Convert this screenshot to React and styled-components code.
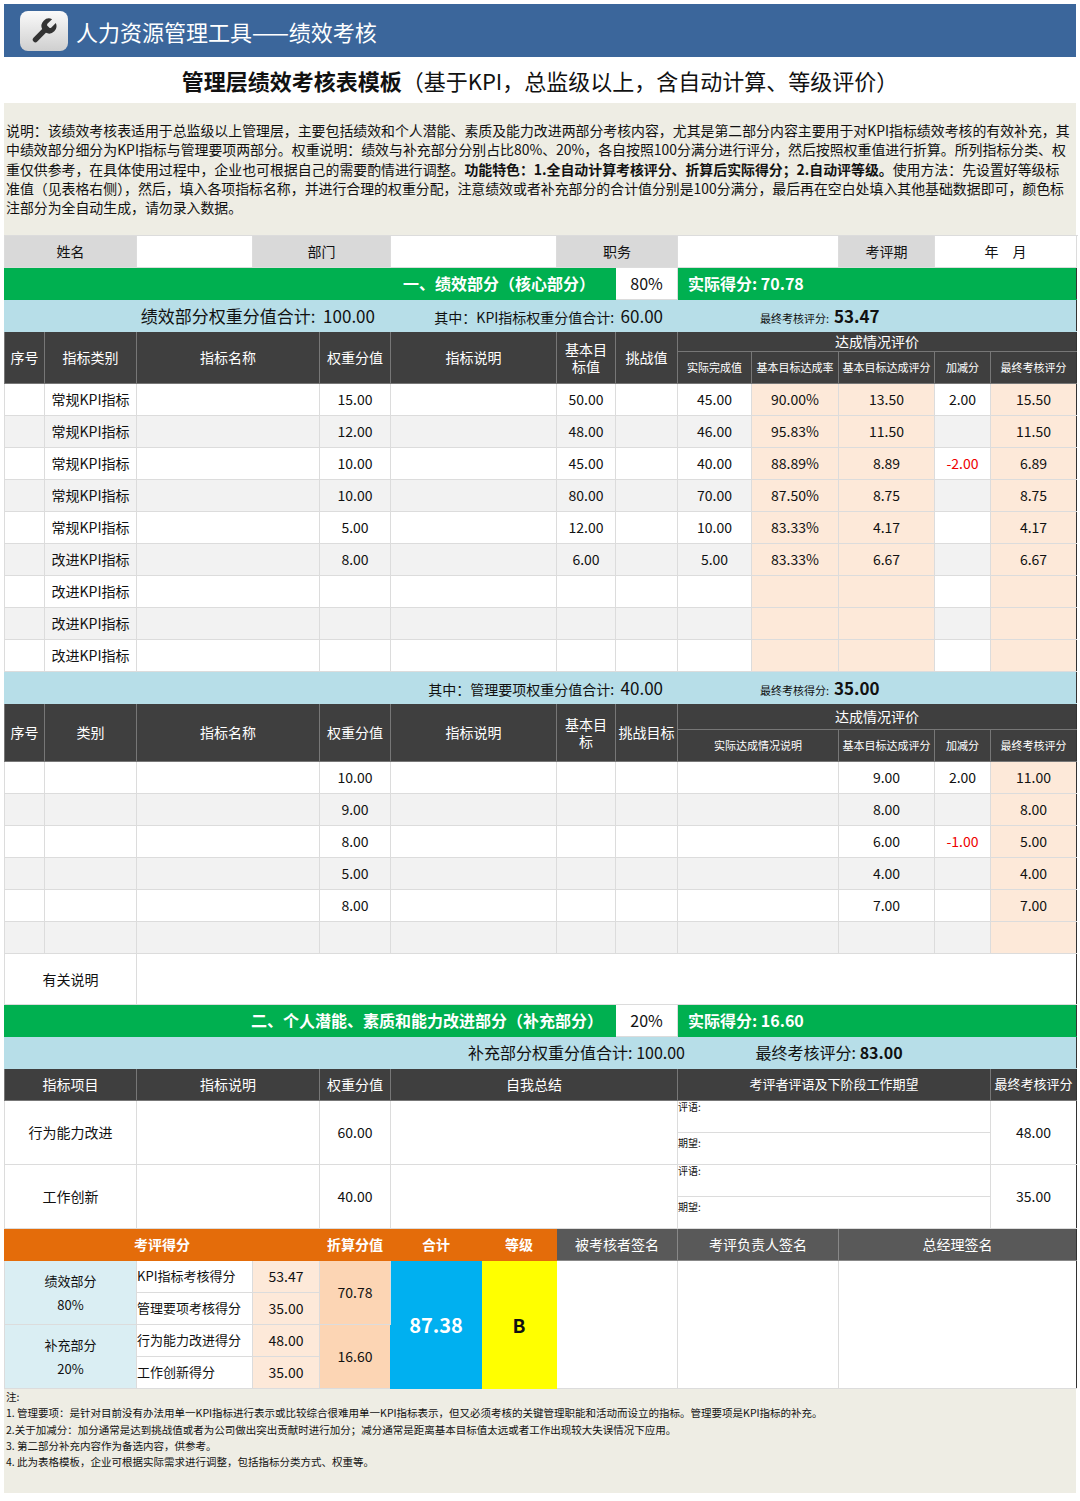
import React from "react";
import styled, { createGlobalStyle } from "styled-components";

const G = createGlobalStyle`
  body{margin:0;background:#fff;font-family:"Noto Sans CJK SC","Noto Sans",sans-serif;color:#111;}
`;
const Page = styled.div`width:1072px;padding:4px;`;
const TitleBar = styled.div`height:53px;background:#3b669b;display:flex;align-items:center;gap:8px;padding-left:16px;color:#fff;font-size:22px;`;
const Icon = styled.div`width:48px;height:40px;border-radius:8px;background:linear-gradient(#fafafa,#cfcfcf);display:flex;align-items:center;justify-content:center;`;
const Sub = styled.div`height:46px;display:flex;align-items:center;justify-content:center;font-size:22px;b{font-weight:700;}`;
const Desc = styled.div`background:#eeede4;padding:18px 4px 18px 2px;font-size:13.9px;line-height:19.3px;height:96px;`;
const T = styled.table`border-collapse:collapse;table-layout:fixed;width:1072px;font-size:14px;border:1.5px solid #333;`;
const C = styled.td`
  box-sizing:border-box;height:${p=>(p.h||33)-1}px;padding:0 ${p=>p.pad||0}px;text-align:${p=>p.al||"center"};
  background:${p=>p.bg||"#fff"};color:${p=>p.fg||"#111"};font-size:${p=>p.fs||14}px;
  font-weight:${p=>p.b?700:400};border:1px solid ${p=>p.bd||"#dcdcdc"};white-space:nowrap;overflow:hidden;line-height:1.15;
`;
const Notes = styled.div`background:#eeede4;font-size:10.5px;line-height:16.3px;padding:0 2px;height:104px;`;

const widths=[40,92,116,67,71,91,75,59,62,74,87,96,56,86];
const DARK="#3f3f3f",GREEN="#00b050",LB="#b7dee8",PE="#fde9d9",GR="#f2f2f2",GY="#d9d9d9",OR="#e46c0a";

const kpi=[
 ["常规KPI指标","15.00","50.00","45.00","90.00%","13.50","2.00","15.50"],
 ["常规KPI指标","12.00","48.00","46.00","95.83%","11.50","","11.50"],
 ["常规KPI指标","10.00","45.00","40.00","88.89%","8.89","-2.00","6.89"],
 ["常规KPI指标","10.00","80.00","70.00","87.50%","8.75","","8.75"],
 ["常规KPI指标","5.00","12.00","10.00","83.33%","4.17","","4.17"],
 ["改进KPI指标","8.00","6.00","5.00","83.33%","6.67","","6.67"],
 ["改进KPI指标","","","","","","",""],
 ["改进KPI指标","","","","","","",""],
 ["改进KPI指标","","","","","","",""],
];
const mg=[["10.00","9.00","2.00","11.00"],["9.00","8.00","","8.00"],["8.00","6.00","-1.00","5.00"],["5.00","4.00","","4.00"],["8.00","7.00","","7.00"],["","","",""]];

export default function App(){
 const H=p=><C bg={DARK} fg="#fff" bd="#777" {...p}/>;
 return <Page><G/>
  <TitleBar><Icon><svg width="30" height="30" viewBox="0 0 24 24"><path d="M14.7 6.3a1 1 0 0 0 0 1.4l1.6 1.6a1 1 0 0 0 1.4 0l3.77-3.77a6 6 0 0 1-7.94 7.94l-6.91 6.91a2.12 2.12 0 0 1-3-3l6.91-6.91a6 6 0 0 1 7.940-7.94l-3.76 3.760z" fill="#333"/></svg></Icon>人力资源管理工具——绩效考核</TitleBar>
  <Sub><b>管理层绩效考核表模板</b>（基于KPI，总监级以上，含自动计算、等级评价）</Sub>
  <Desc>说明：该绩效考核表适用于总监级以上管理层，主要包括绩效和个人潜能、素质及能力改进两部分考核内容，尤其是第二部分内容主要用于对KPI指标绩效考核的有效补充，其中绩效部分细分为KPI指标与管理要项两部分。权重说明：绩效与补充部分分别占比80%、20%，各自按照100分满分进行评分，然后按照权重值进行折算。所列指标分类、权重仅供参考，在具体使用过程中，企业也可根据自己的需要酌情进行调整。<b>功能特色：1.全自动计算考核评分、折算后实际得分；2.自动评等级。</b>使用方法：先设置好等级标准值（见表格右侧），然后，填入各项指标名称，并进行合理的权重分配，注意绩效或者补充部分的合计值分别是100分满分，最后再在空白处填入其他基础数据即可，颜色标注部分为全自动生成，请勿录入数据。</Desc>
  <T><colgroup>{widths.map((w,i)=><col key={i} style={{width:w}}/>)}</colgroup><tbody>
   <tr><C colSpan={2} bg={GY}>姓名</C><C/><C colSpan={2} bg={GY}>部门</C><C colSpan={2}/><C colSpan={2} bg={GY}>职务</C><C colSpan={2}/><C bg={GY}>考评期</C><C colSpan={3}>年　月</C></tr>
   <tr><C colSpan={8} bg={GREEN} fg="#fff" fs={16} b al="right" pad={20} bd={GREEN}>一、绩效部分（核心部分）</C><C fs={16}>80%</C><C colSpan={5} bg={GREEN} fg="#fff" fs={16} b al="left" pad={10} bd={GREEN}>实际得分: 70.78</C></tr>
   <tr><C colSpan={5} bg={LB} fs={17} al="right" pad={15} h={31} bd={LB}>绩效部分权重分值合计:&nbsp;&nbsp;100.00</C><C colSpan={4} bg={LB} al="right" pad={14} bd={LB}>其中：KPI指标权重分值合计:&nbsp;&nbsp;<span style={{fontSize:17}}>60.00</span></C><C colSpan={5} bg={LB} al="left" pad={82} fs={11} bd={LB}>最终考核评分:&nbsp;&nbsp;<b style={{fontSize:17}}>53.47</b></C></tr>
   <tr><H rowSpan={2}>序号</H><H rowSpan={2}>指标类别</H><H rowSpan={2} colSpan={2}>指标名称</H><H rowSpan={2}>权重分值</H><H rowSpan={2} colSpan={2}>指标说明</H><H rowSpan={2}>基本目<br/>标值</H><H rowSpan={2}>挑战值</H><H colSpan={5} h={21}>达成情况评价</H></tr>
   <tr><H fs={11} h={29}>实际完成值</H><H fs={11}>基本目标达成率</H><H fs={11}>基本目标达成评分</H><H fs={11}>加减分</H><H fs={11}>最终考核评分</H></tr>
   {kpi.map((r,i)=>{const bg=i%2?GR:"#fff";return <tr key={i}><C bg={bg}/><C bg={bg}>{r[0]}</C><C colSpan={2} bg={bg}/><C bg={bg}>{r[1]}</C><C colSpan={2} bg={bg}/><C bg={bg}>{r[2]}</C><C bg={bg}/><C bg={bg}>{r[3]}</C><C bg={PE}>{r[4]}</C><C bg={PE}>{r[5]}</C><C bg={bg} fg={r[6].startsWith("-")?"#e00":"#111"}>{r[6]}</C><C bg={PE}>{r[7]}</C></tr>})}
   <tr><C colSpan={9} bg={LB} al="right" pad={14} bd={LB}>其中：管理要项权重分值合计:&nbsp;&nbsp;<span style={{fontSize:17}}>40.00</span></C><C colSpan={5} bg={LB} al="left" pad={82} fs={11} bd={LB}>最终考核得分:&nbsp;&nbsp;<b style={{fontSize:17}}>35.00</b></C></tr>
   <tr><H rowSpan={2}>序号</H><H rowSpan={2}>类别</H><H rowSpan={2} colSpan={2}>指标名称</H><H rowSpan={2}>权重分值</H><H rowSpan={2} colSpan={2}>指标说明</H><H rowSpan={2}>基本目<br/>标</H><H rowSpan={2}>挑战目标</H><H colSpan={5} h={27}>达成情况评价</H></tr>
   <tr><H colSpan={2} fs={11} h={28}>实际达成情况说明</H><H fs={11}>基本目标达成评分</H><H fs={11}>加减分</H><H fs={11}>最终考核评分</H></tr>
   {mg.map((r,i)=>{const bg=i%2?GR:"#fff";return <tr key={i}><C bg={bg}/><C bg={bg}/><C colSpan={2} bg={bg}/><C bg={bg}>{r[0]}</C><C colSpan={2} bg={bg}/><C bg={bg}/><C bg={bg}/><C colSpan={2} bg={bg}/><C bg={bg}>{r[1]}</C><C bg={bg} fg={r[2].startsWith("-")?"#e00":"#111"}>{r[2]}</C><C bg={PE}>{r[3]}</C></tr>})}
   <tr><C colSpan={2} h={52}>有关说明</C><C colSpan={12}/></tr>
   <tr><C colSpan={8} bg={GREEN} fg="#fff" fs={16} b al="right" pad={12} bd={GREEN}>二、个人潜能、素质和能力改进部分（补充部分）</C><C fs={16}>20%</C><C colSpan={5} bg={GREEN} fg="#fff" fs={16} b al="left" pad={10} bd={GREEN}>实际得分: 16.60</C></tr>
   <tr><C colSpan={10} bg={LB} fs={16} al="right" pad={66} bd={LB}>补充部分权重分值合计: 100.00</C><C colSpan={4} bg={LB} fs={16} al="left" pad={0} bd={LB}>&nbsp;最终考核评分: <b>83.00</b></C></tr>
   <tr><H colSpan={2} h={32}>指标项目</H><H colSpan={2}>指标说明</H><H>权重分值</H><H colSpan={4}>自我总结</H><H colSpan={4} fs={13}>考评者评语及下阶段工作期望</H><H fs={13}>最终考核评分</H></tr>
   {[["行为能力改进","60.00","48.00"],["工作创新","40.00","35.00"]].map(r=><React.Fragment key={r[0]}>
    <tr><C colSpan={2} rowSpan={2}>{r[0]}</C><C colSpan={2} rowSpan={2}/><C rowSpan={2}>{r[1]}</C><C colSpan={4} rowSpan={2}/><C colSpan={4} al="left" fs={10} h={33} style={{verticalAlign:"top"}}>评语:</C><C rowSpan={2}>{r[2]}</C></tr>
    <tr><C colSpan={4} al="left" fs={10} h={33} style={{verticalAlign:"top",paddingTop:4}}>期望:</C></tr>
   </React.Fragment>)}
   <tr><C colSpan={4} bg={OR} fg="#fff" b bd={OR} h={31}>考评得分</C><C bg={OR} fg="#fff" b bd={OR}>折算分值</C><C bg={OR} fg="#fff" b bd={OR}>合计</C><C bg={OR} fg="#fff" b bd={OR}>等级</C><C colSpan={2} bg="#595959" fg="#fff" bd="#888">被考核者签名</C><C colSpan={2} bg="#595959" fg="#fff" bd="#888">考评负责人签名</C><C colSpan={3} bg="#595959" fg="#fff" bd="#888">总经理签名</C></tr>
   <tr><C colSpan={2} rowSpan={2} bg="#daeef3" fs={13} style={{lineHeight:"24px"}}>绩效部分<br/>80%</C><C al="left" fs={13} h={28}>KPI指标考核得分</C><C bg={PE}>53.47</C><C rowSpan={2} bg="#fcd5b4">70.78</C><C rowSpan={4} bg="#00b0f0" fg="#fff" fs={20} b bd="#00b0f0">87.38</C><C rowSpan={4} bg="#ffff00" fs={19} b bd="#ffff00">B</C><C colSpan={2} rowSpan={4}/><C colSpan={2} rowSpan={4}/><C colSpan={3} rowSpan={4}/></tr>
   <tr><C al="left" fs={13} h={29}>管理要项考核得分</C><C bg={PE}>35.00</C></tr>
   <tr><C colSpan={2} rowSpan={2} bg="#daeef3" fs={13} style={{lineHeight:"24px"}}>补充部分<br/>20%</C><C al="left" fs={13} h={28}>行为能力改进得分</C><C bg={PE}>48.00</C><C rowSpan={2} bg="#fcd5b4">16.60</C></tr>
   <tr><C al="left" fs={13} h={29}>工作创新得分</C><C bg={PE}>35.00</C></tr>
  </tbody></T>
  <Notes>注:<br/>1. 管理要项：是针对目前没有办法用单一KPI指标进行表示或比较综合很难用单一KPI指标表示，但又必须考核的关键管理职能和活动而设立的指标。管理要项是KPI指标的补充。<br/>2.关于加减分：加分通常是达到挑战值或者为公司做出突出贡献时进行加分；减分通常是距离基本目标值太远或者工作出现较大失误情况下应用。<br/>3. 第二部分补充内容作为备选内容，供参考。<br/>4. 此为表格模板，企业可根据实际需求进行调整，包括指标分类方式、权重等。</Notes>
 </Page>;
}
